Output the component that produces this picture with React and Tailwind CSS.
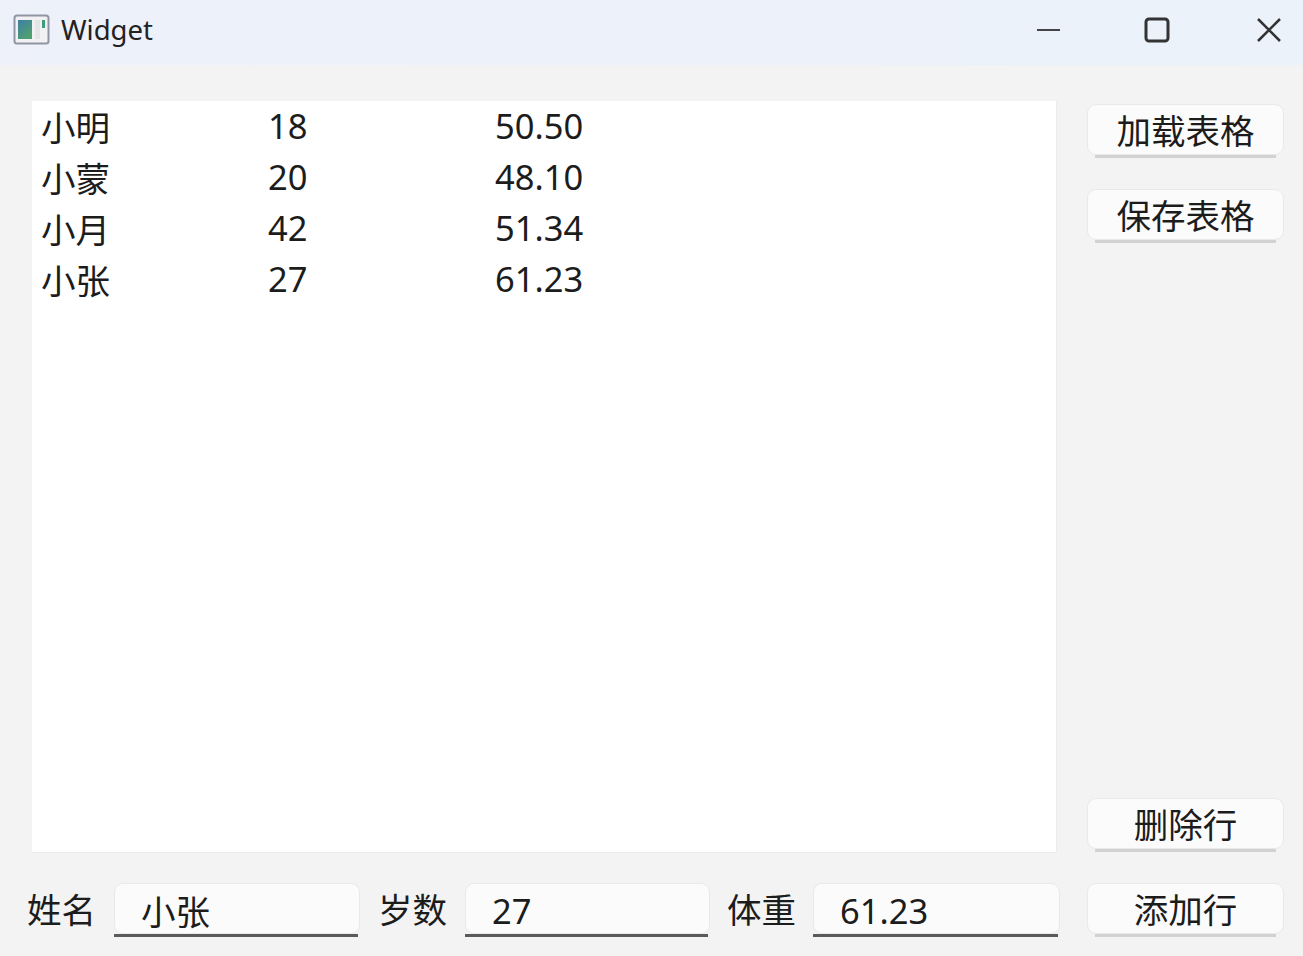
import React from 'react';

const rows = [
  ['小明', '18', '50.50'],
  ['小蒙', '20', '48.10'],
  ['小月', '42', '51.34'],
  ['小张', '27', '61.23'],
];

function SideButton({ children }) {
  return (
    <div className="w-[197px] flex flex-col">
      <button className="h-[51px] pt-[4px] flex items-center justify-center bg-[#fbfbfb] rounded-[9px] border border-[#e9e9e9] text-[34.5px] leading-none text-[#1c1c1c]">
        {children}
      </button>
      <div className="h-[3px] mx-[8px] bg-[#d2d2d2]" />
    </div>
  );
}

function Field({ width, value, numeric }) {
  return (
    <div className={`${width} flex flex-col`}>
      <div className={`h-[51px] flex items-center pl-[26px] ${numeric ? 'pt-[5px]' : 'pt-[7px]'} bg-[#fbfbfb] rounded-[9px] border border-[#e9e9e9] text-[34.5px] leading-none text-[#1c1c1c]`}>
        {value}
      </div>
      <div className="h-[3px] mr-[2px] bg-[#5a5a5a]" />
    </div>
  );
}

export default function App() {
  return (
    <div className="w-[1303px] h-[956px] flex flex-col overflow-hidden bg-[#f3f3f3] text-[#1c1c1c] font-['Noto_Sans','Noto_Sans_CJK_SC',sans-serif]">
      {/* Title bar */}
      <div className="h-[65px] pb-[6px] flex items-center bg-gradient-to-r from-[#eef1fa] to-[#ebf2fa]">
        <svg className="ml-[13px]" width="37" height="31" viewBox="0 0 37 31">
          <defs>
            <linearGradient id="pane" x1="0" y1="0" x2="0.6" y2="1">
              <stop offset="0" stopColor="#3f7fa6" />
              <stop offset="1" stopColor="#4fa070" />
            </linearGradient>
          </defs>
          <rect x="1.5" y="1.5" width="34" height="28" rx="2.5" fill="#f1f1f3" stroke="#8f95a3" strokeWidth="2" />
          <rect x="5" y="6" width="14" height="19" fill="url(#pane)" />
          <rect x="29" y="6" width="3" height="8" fill="#3f9c7c" />
          <rect x="22" y="6" width="5" height="19" fill="#e4e6e6" />
        </svg>
        <span className="ml-[11px] text-[27.5px] leading-none text-[#222]">Widget</span>
        <div className="ml-auto flex items-center">
          <svg width="25" height="4" viewBox="0 0 25 4" className="mr-[83px]">
            <path d="M1 2H24" stroke="#444" strokeWidth="2" />
          </svg>
          <svg width="26" height="26" viewBox="0 0 26 26" className="mr-[86px]">
            <rect x="2" y="2" width="22" height="22" rx="3" fill="none" stroke="#333" strokeWidth="3" />
          </svg>
          <svg width="26" height="26" viewBox="0 0 26 26" className="mr-[21px]">
            <path d="M2 2L24 24M24 2L2 24" stroke="#333" strokeWidth="2.5" />
          </svg>
        </div>
      </div>

      {/* List and side buttons */}
      <div className="flex pl-[32px] pt-[36px]">
        <div className="w-[1025px] h-[752px] pt-[2px] bg-white border-r border-b border-[#ececec]">
          {rows.map((row) => (
            <div key={row[0]} className="grid grid-cols-[227px_227px_227px] h-[51px] pl-[9px] items-center text-[34.5px] leading-none text-[#1c1c1c]">
              <span>{row[0]}</span>
              <span className="pb-[4px]">{row[1]}</span>
              <span className="pb-[4px]">{row[2]}</span>
            </div>
          ))}
        </div>
        <div className="ml-[30px] pt-[3px] pb-[1px] flex flex-col">
          <SideButton>加载表格</SideButton>
          <div className="mt-[31px]">
            <SideButton>保存表格</SideButton>
          </div>
          <div className="mt-auto">
            <SideButton>删除行</SideButton>
          </div>
        </div>
      </div>

      {/* Input row */}
      <div className="flex items-start pl-[27px] mt-[30px] text-[34.5px] leading-none">
        <span className="w-[87px] self-center">姓名</span>
        <Field width="w-[246px]" value="小张" />
        <span className="ml-[18px] w-[87px] self-center">岁数</span>
        <Field width="w-[245px]" value="27" numeric />
        <span className="ml-[17px] w-[86px] self-center">体重</span>
        <Field width="w-[247px]" value="61.23" numeric />
        <div className="ml-[27px]">
          <SideButton>添加行</SideButton>
        </div>
      </div>
    </div>
  );
}
